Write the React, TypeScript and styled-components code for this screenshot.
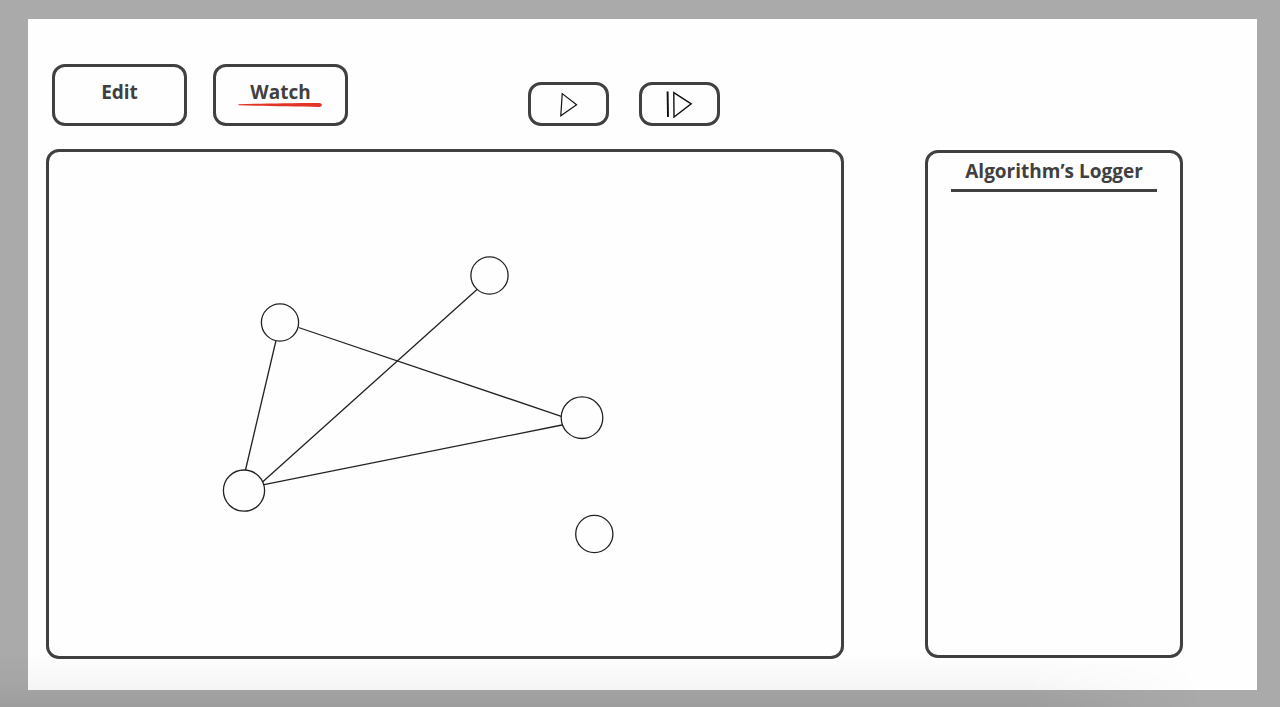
import React from "react";
import styled, { createGlobalStyle } from "styled-components";

const ink = "#404040";

const GlobalStyle = createGlobalStyle`
  *, *::before, *::after { box-sizing: border-box; }
  body {
    margin: 0;
    background: #aaaaaa;
    color: ${ink};
    font-family: "Open Sans", "Noto Sans", sans-serif;
  }
`;

const Page = styled.div`
  position: relative;
  display: flex;
  min-height: 100vh;
  padding: 19px 23px 18px 28px;
`;

const Sheet = styled.main`
  display: flex;
  flex: 1;
  flex-direction: column;
  gap: 23px;
  padding: 45px 74px 31px 18px;
  background: #fefefe;
`;

const Toolbar = styled.header`
  display: flex;
  align-items: flex-end;
  gap: 180px;
  padding-left: 6px;
`;

const ButtonGroup = styled.div<{ $gap: number }>`
  display: flex;
  gap: ${({ $gap }) => $gap}px;
`;

const OutlineButton = styled.button`
  border: 3px solid ${ink};
  border-radius: 13px;
  background: transparent;
  color: inherit;
  font-family: inherit;
  cursor: pointer;
`;

const ModeButton = styled(OutlineButton)`
  position: relative;
  width: 135px;
  height: 62px;
  padding: 0 0 6px;
  font-size: 19px;
  font-weight: 700;
  line-height: 26px;
`;

const Scribble = styled.svg`
  position: absolute;
  right: 22px;
  bottom: 15px;
  width: 86px;
  height: 6px;
`;

const PlaybackButton = styled(OutlineButton)`
  display: flex;
  align-items: center;
  justify-content: center;
  width: 81px;
  height: 44px;
  padding: 0;
`;

const Workspace = styled.div`
  display: grid;
  flex: 1;
  grid-template-columns: minmax(0, 1fr) 258px;
  gap: 81px;
`;

const Panel = styled.section`
  border: 3px solid ${ink};
  border-radius: 13px;
`;

const Graph = styled.svg`
  display: block;
  width: 100%;
  stroke: #222222;
  stroke-width: 1.3;
`;

const Logger = styled(Panel)`
  margin: 1px 0;
  padding: 5px 23px;
`;

const LoggerTitle = styled.h2`
  margin: 0;
  padding-bottom: 5px;
  border-bottom: 3px solid ${ink};
  font-size: 19px;
  font-weight: 700;
  line-height: 26px;
  text-align: center;
  white-space: nowrap;
`;

const BottomShade = styled.div`
  position: absolute;
  right: 0;
  bottom: 0;
  left: 0;
  height: 54px;
  background: linear-gradient(
    to bottom,
    rgba(0, 0, 0, 0),
    rgba(0, 0, 0, 0.03) 60%,
    rgba(0, 0, 0, 0.08)
  );
  mask-image: linear-gradient(to right, #000 80%, transparent 94%);
  pointer-events: none;
`;

const nodes = [
  { id: "a", x: 231, y: 170.5, r: 18.6 },
  { id: "b", x: 440.5, y: 123.5, r: 18.6 },
  { id: "c", x: 533, y: 265.7, r: 20.8 },
  { id: "d", x: 195, y: 338.6, r: 20.6 },
  { id: "e", x: 545.3, y: 382, r: 18.6 },
];

const edges = [
  [227, 188.5, 196.5, 318],
  [249.5, 175.5, 512.3, 264.3],
  [428, 137.5, 213.5, 330],
  [215, 332.7, 513, 273],
];

export default function App() {
  return (
    <>
      <GlobalStyle />
      <Page>
        <Sheet>
          <Toolbar>
            <ButtonGroup $gap={26}>
              <ModeButton type="button">Edit</ModeButton>
              <ModeButton type="button" aria-pressed="true">
                Watch
                <Scribble viewBox="0 0 86 6" aria-hidden="true">
                  <path
                    d="M1 2.2 C22 1.6 50 1 82 0.9 Q85 1.2 85 3.2 Q84 5 82 4.9 C58 4.4 28 3.9 2 3.3 Z"
                    fill="#e23427"
                  />
                </Scribble>
              </ModeButton>
            </ButtonGroup>
            <ButtonGroup $gap={30}>
              <PlaybackButton type="button" aria-label="Play">
                <svg width="20" height="26" viewBox="0 0 20 26" fill="none">
                  <path d="M3.2 2.6 L17.6 13.8 L1.8 24.8 Z" stroke="#111" strokeWidth="1.2" />
                </svg>
              </PlaybackButton>
              <PlaybackButton type="button" aria-label="Step forward">
                <svg width="28" height="28" viewBox="0 0 28 28" fill="none" stroke="#111">
                  <path d="M1.6 1.5 L2 27" strokeWidth="1.9" />
                  <path d="M7.8 2.6 L25.2 13.9 L8 27 Z" strokeWidth="1.4" />
                </svg>
              </PlaybackButton>
            </ButtonGroup>
          </Toolbar>
          <Workspace>
            <Panel aria-label="Graph">
              <Graph viewBox="0 0 792 504" role="img" aria-label="Graph with five nodes and four edges">
                {edges.map(([x1, y1, x2, y2]) => (
                  <line key={`${x1}-${y1}`} x1={x1} y1={y1} x2={x2} y2={y2} />
                ))}
                {nodes.map(({ id, x, y, r }) => (
                  <circle key={id} cx={x} cy={y} r={r} fill="none" />
                ))}
              </Graph>
            </Panel>
            <Logger>
              <LoggerTitle>Algorithm’s Logger</LoggerTitle>
            </Logger>
          </Workspace>
        </Sheet>
        <BottomShade />
      </Page>
    </>
  );
}
